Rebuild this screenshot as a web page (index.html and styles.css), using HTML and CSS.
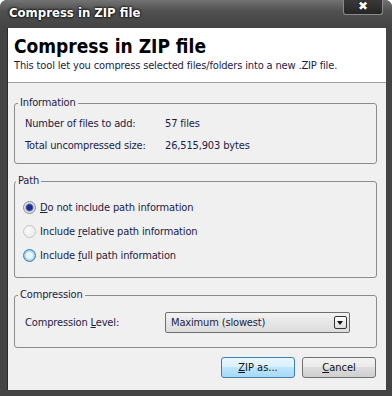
FILE: index.html
```html
<!DOCTYPE html>
<html lang="en">
  <head>
    <meta charset="UTF-8" />
    <title>Compress in ZIP file</title>
    <link rel="stylesheet" href="styles.css">
  </head>
  <body>
    <div class="window">
      <div class="titlebar">
        <span class="title">Compress in ZIP file</span>
        <span class="close">&#x2716;</span>
      </div>

      <div class="client">
        <div class="header">
          <h1>Compress in ZIP file</h1>
          <p>This tool let you compress selected files/folders into a new .ZIP file.</p>
        </div>

        <div class="content">
          <fieldset class="group group-info">
            <legend>Information</legend>
            <div class="row">
              <span class="label">Number of files to add:</span>
              <span class="value">57 files</span>
            </div>
            <div class="row">
              <span class="label">Total uncompressed size:</span>
              <span class="value">26,515,903 bytes</span>
            </div>
          </fieldset>

          <fieldset class="group group-path">
            <legend>Path</legend>
            <div class="radio-row">
              <span class="radio checked"></span>
              <span><u>D</u>o not include path information</span>
            </div>
            <div class="radio-row">
              <span class="radio disabled"></span>
              <span>Include <u>r</u>elative path information</span>
            </div>
            <div class="radio-row">
              <span class="radio hot"></span>
              <span>Include <u>f</u>ull path information</span>
            </div>
          </fieldset>

          <fieldset class="group group-compression">
            <legend>Compression</legend>
            <div class="row">
              <span class="label">Compression <u>L</u>evel:</span>
              <div class="select">
                <span>Maximum (slowest)</span>
                <span class="drop"></span>
              </div>
            </div>
          </fieldset>

          <div class="buttons">
            <button class="btn btn-default"><u>Z</u>IP as...</button>
            <button class="btn"><u>C</u>ancel</button>
          </div>
        </div>
      </div>
    </div>
  </body>
</html>
```

FILE: styles.css
```css
body {
  margin: 0;
  background: #fff;
  font-family: "DejaVu Sans Condensed", "DejaVu Sans", sans-serif;
  font-size: 11px;
  letter-spacing: -0.15px;
  color: #1c1c44;
}
.window {
  width: 392px;
  height: 396px;
  box-sizing: border-box;
  padding: 0 6px 6px 7px;
  background: #444;
  border-radius: 7px 7px 0 0;
  display: flex;
  flex-direction: column;
}
.titlebar {
  height: 28px;
  flex: none;
  display: flex;
  align-items: flex-start;
  justify-content: space-between;
  margin: 0 -6px 0 -7px;
  padding: 0 9px 0 9px;
  border-radius: 7px 7px 0 0;
  background: linear-gradient(#737373, #505050 40%, #434343);
}
.title {
  margin-top: 5px;
  font-weight: bold;
  font-size: 13px;
  letter-spacing: 0;
  color: #fff;
  text-shadow: 0 0 3px #000, 0 0 2px #000;
}
.close {
  width: 40px;
  height: 16px;
  margin-top: -1px;
  box-sizing: border-box;
  border: 1px solid #8a8a8a;
  border-top: none;
  border-radius: 0 0 3px 3px;
  background: linear-gradient(#3a3a3a, #262626);
  color: #fff;
  font-family: "DejaVu Sans", sans-serif;
  font-weight: bold;
  font-size: 12px;
  line-height: 15px;
  text-align: center;
  text-shadow: 0 0 2px #000;
}
.client {
  flex: 1;
  display: flex;
  flex-direction: column;
  border-left: 1px solid #2a2a2a;
  background: #f0f0f0;
}
.header {
  height: 55px;
  box-sizing: border-box;
  background: #fff;
  border-bottom: 1px solid #a0a0a0;
  padding: 6px 6px 0 6px;
}
.header h1 {
  margin: 0;
  font-size: 19px;
  line-height: 24px;
  font-weight: bold;
  letter-spacing: 0;
  color: #000;
}
.header p {
  margin: 1px 0 0 0;
  line-height: 14px;
}
.content {
  padding: 13px 9px 0 6px;
  display: flex;
  flex-direction: column;
}
.group {
  margin: 0 0 10px 0;
  border: 1px solid #8c8c8c;
  border-radius: 3px;
  padding: 2px 10px 7px 10px;
}
.group legend {
  padding: 0 2px;
  margin-left: -7px;
  line-height: 14px;
}
.row {
  display: flex;
  align-items: center;
  height: 22px;
}
.label {
  width: 140px;
  flex: none;
}
.group-path {
  padding: 7px 10px 10px 8px;
}
.radio-row {
  display: flex;
  align-items: center;
  gap: 4px;
  height: 24px;
}
.radio {
  width: 13px;
  height: 13px;
  box-sizing: border-box;
  border-radius: 50%;
  border: 1px solid #8e8f8f;
  background: radial-gradient(circle at 40% 40%, #fff, #d8d8d8);
}
.radio.checked {
  background: radial-gradient(circle, #1b2d8a 0 2.5px, #5a70c8 3.5px, #e6e6e6 4.5px, #cfcfcf);
}
.radio.disabled {
  border-color: #c6c6c6;
  background: radial-gradient(circle at 40% 40%, #fafafa, #e8e8e8);
}
.radio.hot {
  border-color: #3c7fb1;
  background: radial-gradient(circle, #e8f5fd 0 3px, #9ccfef 5px, #5aa7dc);
}
.group-compression {
  margin-bottom: 9px;
  padding: 8px 10px 13px 10px;
}
.group-compression .row {
  height: 24px;
}
.select {
  width: 185px;
  height: 21px;
  box-sizing: border-box;
  border: 1px solid #707070;
  border-radius: 2px;
  background: linear-gradient(#f3f3f3, #e6e6e6 50%, #dcdcdc);
  display: flex;
  align-items: center;
  justify-content: space-between;
  padding: 0 2px 0 5px;
}
.drop {
  width: 13px;
  height: 13px;
  box-sizing: border-box;
  border: 1px solid #333;
  border-radius: 2px;
  background: linear-gradient(#fff, #dcdcdc);
  position: relative;
}
.drop::after {
  content: "";
  position: absolute;
  left: 2px;
  top: 4px;
  border-left: 3.5px solid transparent;
  border-right: 3.5px solid transparent;
  border-top: 4px solid #111;
}
.buttons {
  display: flex;
  justify-content: flex-end;
  gap: 7px;
  padding-right: 1px;
}
.btn {
  width: 74px;
  height: 21px;
  padding: 0;
  font-family: inherit;
  font-size: 11px;
  color: #111;
  border: 1px solid #707070;
  border-radius: 3px;
  background: linear-gradient(#f2f2f2, #ebebeb 45%, #dddddd 50%, #cfcfcf);
}
.btn-default {
  border-color: #3c7fb1;
  background: linear-gradient(#eaf6fd, #d9f0fc 45%, #bee6fd 50%, #a7d9f5);
}
```
